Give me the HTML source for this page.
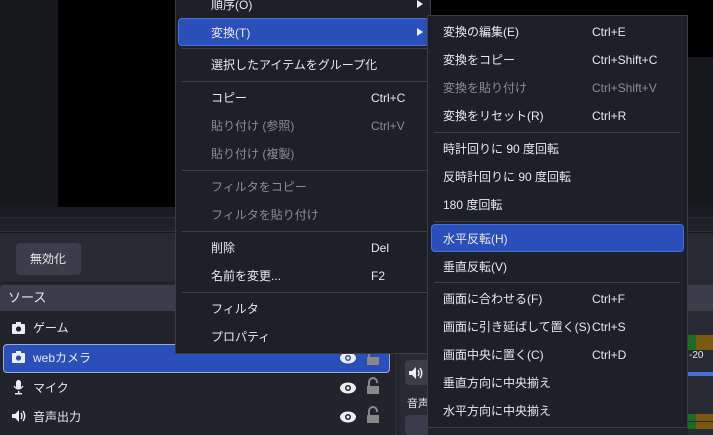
<!DOCTYPE html><html><head><meta charset="utf-8"><style>
*{margin:0;padding:0;box-sizing:border-box}
body{width:713px;height:435px;overflow:hidden;background:#17181c;position:relative;font-family:"Liberation Sans","Noto Sans CJK JP",sans-serif;font-size:12px;color:#e8e8ec}
.a{position:absolute}
.t{position:absolute;white-space:nowrap;line-height:16px}
.d{color:#8a8c94}
.sep{position:absolute;height:1px;background:#3c3f49}
</style></head><body>
<div class="a" style="left:58px;top:0;width:655px;height:57px;background:#000"></div>
<div class="a" style="left:58px;top:0;width:630px;height:207px;background:#000"></div>
<div class="a" style="left:687px;top:0;width:26px;height:27px;background:#000"></div>
<div class="a" style="left:0;top:207px;width:713px;height:10px;background:#1b1c21"></div>
<div class="a" style="left:0;top:217px;width:713px;height:15px;background:#1f2128;border-top:1px solid #2c2e36;border-bottom:1px solid #2c2e36"></div>
<div class="a" style="left:0;top:233px;width:713px;height:202px;background:#272a33"></div>
<div class="a" style="left:16px;top:243px;width:65px;height:32px;background:#3b3e4a;border-radius:4px"></div>
<div class="t" style="left:30px;top:251px">無効化</div>
<div class="a" style="left:0;top:282px;width:176px;height:2px;background:#1f2128"></div>
<div class="a" style="left:0;top:285px;width:395px;height:26px;background:#3b3e4a;border-radius:4px 4px 0 0"></div>
<div class="t" style="left:8px;top:290px;font-size:13px">ソース</div>
<div class="a" style="left:0;top:311px;width:395px;height:124px;background:#22242c"></div>
<div class="a" style="left:3px;top:344px;width:387px;height:29px;background:#2a4fb8;border:1px solid #9aa8d8;border-radius:4px"></div>
<svg class="a" style="left:11px;top:320px" width="16" height="110" viewBox="0 0 16 110">
<g fill="#eee"><rect x="1" y="4" width="13" height="10" rx="1"/><rect x="5" y="2" width="5" height="3"/><circle cx="7.5" cy="9" r="2.6" fill="#22242c"/>
<rect x="1" y="33" width="13" height="10" rx="1"/><rect x="5" y="31" width="5" height="3"/><circle cx="7.5" cy="38" r="2.6" fill="#2a4fb8"/>
<rect x="5" y="60" width="5" height="9" rx="2.5"/><path d="M3 66 q4.5 6 9 0" stroke="#eee" fill="none" stroke-width="1.2"/><rect x="7" y="71" width="1.4" height="3"/><rect x="4" y="73" width="7" height="1.4"/>
<path d="M1 94h3l4-4v12l-4-4H1z"/><path d="M10 93q2 3 0 6M12 91q3.5 5 0 10" stroke="#eee" fill="none" stroke-width="1.4"/></g></svg>
<div class="t" style="left:33px;top:320px">ゲーム</div>
<div class="t" style="left:33px;top:350px">webカメラ</div>
<div class="t" style="left:33px;top:380px">マイク</div>
<div class="t" style="left:33px;top:409px">音声出力</div>
<svg class="a" style="left:339px;top:348px" width="46" height="80" viewBox="0 0 46 80"><g>
<ellipse cx="9" cy="10" rx="8" ry="5.5" fill="#eee"/><circle cx="9" cy="10" r="3" fill="#2a4fb8"/><circle cx="9" cy="10" r="1.5" fill="#eee"/>
<ellipse cx="9" cy="40" rx="8" ry="5.5" fill="#eee"/><circle cx="9" cy="40" r="3" fill="#22242c"/><circle cx="9" cy="40" r="1.5" fill="#eee"/>
<ellipse cx="9" cy="69" rx="8" ry="5.5" fill="#eee"/><circle cx="9" cy="69" r="3" fill="#22242c"/><circle cx="9" cy="69" r="1.5" fill="#eee"/>
<g fill="#888"><rect x="28" y="9" width="12" height="8"/><path d="M30 9v-4a4 4 0 0 1 8 0v1" stroke="#888" fill="none" stroke-width="2"/>
<rect x="28" y="38" width="12" height="8"/><path d="M30 38v-4a4 4 0 0 1 8 0v1" stroke="#888" fill="none" stroke-width="2"/>
<rect x="28" y="67" width="12" height="8"/><path d="M30 67v-4a4 4 0 0 1 8 0v1" stroke="#888" fill="none" stroke-width="2"/></g></g></svg>
<div class="a" style="left:398px;top:311px;width:32px;height:124px;background:#272a33;border-left:1px solid #1f2128"></div>
<div class="a" style="left:405px;top:360px;width:25px;height:25px;background:#3b3e4a;border-radius:4px"></div>
<svg class="a" style="left:408px;top:366px" width="16" height="14"><path d="M1 5h3l4-4v12l-4-4H1z" fill="#eee"/><path d="M10 4q2 3 0 6M12 2q3.5 5 0 10" stroke="#eee" fill="none" stroke-width="1.4"/></svg>
<div class="t" style="left:407px;top:396px;font-size:11px">音声</div>
<div class="a" style="left:405px;top:415px;width:25px;height:20px;background:#3b3e4a;border-radius:4px"></div>
<div class="a" style="left:687px;top:285px;width:26px;height:26px;background:#3b3e4a"></div>
<div class="a" style="left:687px;top:335px;width:26px;height:8px;background:linear-gradient(90deg,#1f6b24 0 9px,#7a5a12 9px)"></div>
<div class="a" style="left:687px;top:343px;width:26px;height:7px;background:linear-gradient(90deg,#1f6b24 0 9px,#7a5a12 9px)"></div>
<div class="t" style="left:689px;top:348px;font-size:10px">-20</div>
<div class="a" style="left:687px;top:372px;width:26px;height:4px;background:#4a6fd8"></div>
<div class="a" style="left:687px;top:414px;width:26px;height:7px;background:linear-gradient(90deg,#1f6b24 0 9px,#7a5a12 9px)"></div>
<div class="a" style="left:687px;top:422px;width:26px;height:7px;background:linear-gradient(90deg,#1f6b24 0 9px,#7a5a12 9px)"></div>
<div class="a" style="left:428px;top:426px;width:260px;height:9px;background:#22242c;border-top:2px solid #1f6b24"></div>

<div class="a" style="left:175px;top:-2px;width:256px;height:356px;background:#1e2028;border:1px solid #3a3d47"></div>
<div class="t" style="left:211px;top:-3px">順序(O)</div>
<div class="a" style="left:178px;top:18px;width:251px;height:28px;background:#2a4fb8;border:1px solid #4a6fd8;border-radius:4px"></div>
<div class="t" style="left:211px;top:25px">変換(T)</div>
<svg class="a" style="left:416px;top:0" width="8" height="40"><path d="M1 0l6 4-6 4zM1 28l6 4-6 4z" fill="#eee"/></svg>
<div class="sep" style="left:182px;top:48px;width:245px"></div>
<div class="t" style="left:211px;top:57px">選択したアイテムをグループ化</div>
<div class="sep" style="left:182px;top:81px;width:245px"></div>
<div class="t" style="left:211px;top:90px">コピー</div><div class="t" style="left:371px;top:90px">Ctrl+C</div>
<div class="t d" style="left:211px;top:118px">貼り付け (参照)</div><div class="t d" style="left:371px;top:118px">Ctrl+V</div>
<div class="t d" style="left:211px;top:146px">貼り付け (複製)</div>
<div class="sep" style="left:182px;top:170px;width:245px"></div>
<div class="t d" style="left:211px;top:179px">フィルタをコピー</div>
<div class="t d" style="left:211px;top:207px">フィルタを貼り付け</div>
<div class="sep" style="left:182px;top:231px;width:245px"></div>
<div class="t" style="left:211px;top:240px">削除</div><div class="t" style="left:371px;top:240px">Del</div>
<div class="t" style="left:211px;top:268px">名前を変更...</div><div class="t" style="left:371px;top:268px">F2</div>
<div class="sep" style="left:182px;top:292px;width:245px"></div>
<div class="t" style="left:211px;top:301px">フィルタ</div>
<div class="t" style="left:211px;top:329px">プロパティ</div>

<div class="a" style="left:427px;top:15px;width:261px;height:413px;background:#1e2028;border:1px solid #3a3d47"></div>
<div class="t" style="left:443px;top:24px">変換の編集(E)</div><div class="t" style="left:592px;top:24px">Ctrl+E</div>
<div class="t" style="left:443px;top:52px">変換をコピー</div><div class="t" style="left:592px;top:52px">Ctrl+Shift+C</div>
<div class="t d" style="left:443px;top:80px">変換を貼り付け</div><div class="t d" style="left:592px;top:80px">Ctrl+Shift+V</div>
<div class="t" style="left:443px;top:108px">変換をリセット(R)</div><div class="t" style="left:592px;top:108px">Ctrl+R</div>
<div class="sep" style="left:434px;top:132px;width:246px"></div>
<div class="t" style="left:443px;top:141px">時計回りに 90 度回転</div>
<div class="t" style="left:443px;top:169px">反時計回りに 90 度回転</div>
<div class="t" style="left:443px;top:197px">180 度回転</div>
<div class="sep" style="left:434px;top:221px;width:246px"></div>
<div class="a" style="left:431px;top:224px;width:253px;height:28px;background:#2a4fb8;border:1px solid #4a6fd8;border-radius:4px"></div>
<div class="t" style="left:443px;top:231px">水平反転(H)</div>
<div class="t" style="left:443px;top:259px">垂直反転(V)</div>
<div class="sep" style="left:434px;top:282px;width:246px"></div>
<div class="t" style="left:443px;top:291px">画面に合わせる(F)</div><div class="t" style="left:592px;top:291px">Ctrl+F</div>
<div class="t" style="left:443px;top:319px">画面に引き延ばして置く(S)</div><div class="t" style="left:592px;top:319px">Ctrl+S</div>
<div class="t" style="left:443px;top:347px">画面中央に置く(C)</div><div class="t" style="left:592px;top:347px">Ctrl+D</div>
<div class="t" style="left:443px;top:375px">垂直方向に中央揃え</div>
<div class="t" style="left:443px;top:403px">水平方向に中央揃え</div>
</body></html>
